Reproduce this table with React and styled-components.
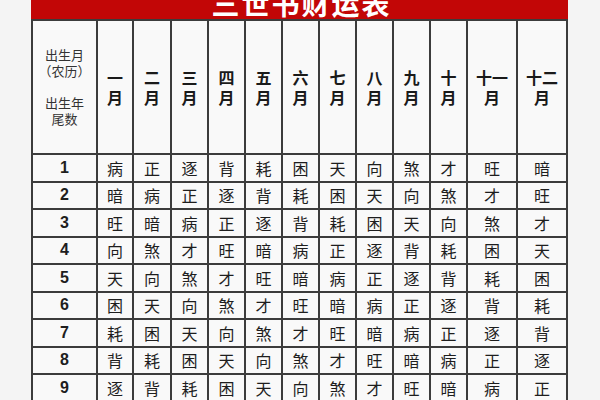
import React from 'react';
import styled, { createGlobalStyle } from 'styled-components';

const GlobalStyle = createGlobalStyle`
  html, body {
    margin: 0;
    padding: 0;
    background: #f4f4f4;
  }
  body {
    font-family: "Noto Sans CJK SC", "Noto Sans", sans-serif;
  }
`;

const Page = styled.div`
  width: 600px;
  height: 400px;
  overflow: hidden;
  padding-left: 31px;
  box-sizing: border-box;
`;

const Sheet = styled.div`
  width: 537px;
`;

const TitleBar = styled.div`
  height: 19px;
  background: #c20606;
  display: flex;
  align-items: flex-end;
  justify-content: center;
  overflow: hidden;
`;

const Title = styled.h1`
  margin: 0;
  margin-bottom: -1px;
  padding-left: 4px;
  font-size: 28px;
  line-height: 34px;
  font-weight: 700;
  letter-spacing: 2px;
  color: #ffffff;
  white-space: nowrap;
`;

const Table = styled.table`
  width: 537px;
  table-layout: fixed;
  border-collapse: collapse;
  background: #f9f9f9;
  color: #1e1e1e;
`;

const HeadCell = styled.th`
  height: 132px;
  border: 2px solid #3c3c3c;
  padding: 0;
  text-align: center;
  vertical-align: middle;
  font-size: 16px;
  line-height: 20px;
  font-weight: 700;
  color: #1a1a1a;
`;

const HeadLine = styled.span`
  display: block;
  height: 20px;
  line-height: 20px;
`;

const CornerCell = styled(HeadCell)`
  font-size: 13px;
  line-height: 16px;
  font-weight: 400;
  color: #333;
`;

const CornerGroup = styled.div`
  & + & {
    margin-top: 16px;
  }
`;

const Cell = styled.td`
  height: 25.5px;
  border: 2px solid #3c3c3c;
  padding: 0;
  text-align: center;
  vertical-align: middle;
  font-size: 16px;
  line-height: 20px;
  font-weight: ${(p) => (p.$num ? 700 : 400)};
  font-family: ${(p) => (p.$num ? '"Liberation Sans", Arial, sans-serif' : 'inherit')};
  color: #1e1e1e;
`;

const widths = [65, 36, 38, 37, 37, 37, 37, 37, 37, 37, 37, 50, 50];

const months = ['一', '二', '三', '四', '五', '六', '七', '八', '九', '十', '十一', '十二'];

const rows = [
  '病正逐背耗困天向煞才旺暗',
  '暗病正逐背耗困天向煞才旺',
  '旺暗病正逐背耗困天向煞才',
  '向煞才旺暗病正逐背耗困天',
  '天向煞才旺暗病正逐背耗困',
  '困天向煞才旺暗病正逐背耗',
  '耗困天向煞才旺暗病正逐背',
  '背耗困天向煞才旺暗病正逐',
  '逐背耗困天向煞才旺暗病正',
];

export default function App() {
  return (
    <Page>
      <GlobalStyle />
      <Sheet>
        <TitleBar>
          <Title>三世书财运表</Title>
        </TitleBar>
        <Table>
          <colgroup>
            {widths.map((w, i) => (
              <col key={i} style={{ width: w }} />
            ))}
          </colgroup>
          <thead>
            <tr>
              <CornerCell>
                <CornerGroup>
                  出生月
                  <br />
                  （农历）
                </CornerGroup>
                <CornerGroup>
                  出生年
                  <br />
                  尾数
                </CornerGroup>
              </CornerCell>
              {months.map((m) => (
                <HeadCell key={m}>
                  <HeadLine>{m}</HeadLine>
                  <HeadLine>月</HeadLine>
                </HeadCell>
              ))}
            </tr>
          </thead>
          <tbody>
            {rows.map((r, i) => (
              <tr key={i}>
                <Cell $num>{i + 1}</Cell>
                {r.split('').map((c, j) => (
                  <Cell key={j}>{c}</Cell>
                ))}
              </tr>
            ))}
          </tbody>
        </Table>
      </Sheet>
    </Page>
  );
}
